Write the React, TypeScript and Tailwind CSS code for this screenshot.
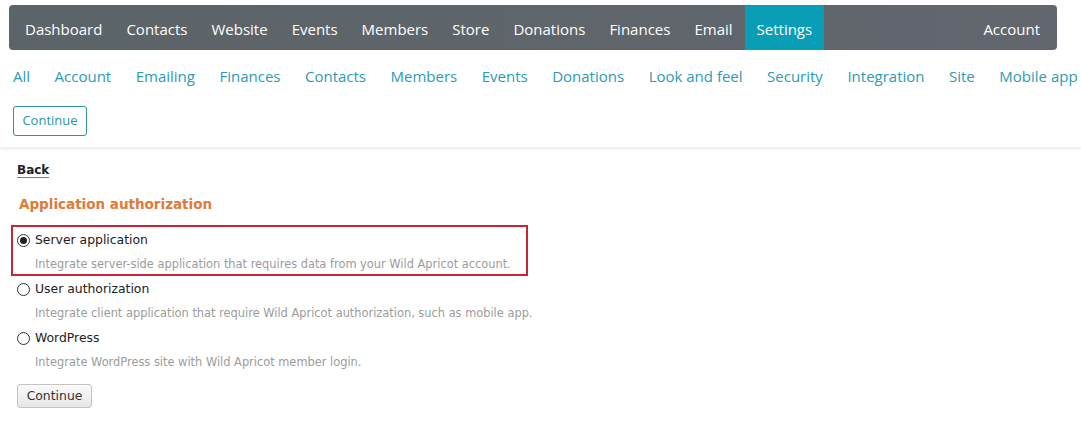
import { useState } from "react";

const topNav = [
  "Dashboard",
  "Contacts",
  "Website",
  "Events",
  "Members",
  "Store",
  "Donations",
  "Finances",
  "Email",
  "Settings",
];

const tabs = [
  "All",
  "Account",
  "Emailing",
  "Finances",
  "Contacts",
  "Members",
  "Events",
  "Donations",
  "Look and feel",
  "Security",
  "Integration",
  "Site",
  "Mobile app",
];

const options = [
  {
    id: "server",
    label: "Server application",
    desc: "Integrate server-side application that requires data from your Wild Apricot account.",
  },
  {
    id: "user",
    label: "User authorization",
    desc: "Integrate client application that require Wild Apricot authorization, such as mobile app.",
  },
  {
    id: "wp",
    label: "WordPress",
    desc: "Integrate WordPress site with Wild Apricot member login.",
  },
];

function Radio({ checked }: { checked: boolean }) {
  return (
    <span className="flex h-[13px] w-[13px] shrink-0 items-center justify-center rounded-full border border-[#333] bg-white">
      {checked && <span className="h-[7px] w-[7px] rounded-full bg-[#222]" />}
    </span>
  );
}

export default function App() {
  const [selected, setSelected] = useState("server");

  return (
    <div className="h-[444px] w-[1081px] overflow-hidden bg-white">
      <div className="h-[147px] bg-white pt-[5px] shadow-[0_2px_3px_rgba(0,0,0,0.08)] font-['Open_Sans',sans-serif]">
        <nav className="mx-[9px] flex h-[45px] w-[1048px] items-stretch rounded-[4px] bg-gradient-to-r from-[#5b6468] to-[#62666e] pl-1 text-[15px] text-white">
          {topNav.map((item) => (
            <div
              key={item}
              className={
                item === "Settings"
                  ? "flex items-center bg-[#0a9db6] px-3 pt-[3px]"
                  : "flex items-center px-3 pt-[3px]"
              }
            >
              {item}
            </div>
          ))}
          <div className="ml-auto flex items-center pl-3 pr-[17px] pt-[3px]">Account</div>
        </nav>

        <div className="flex h-[53px] items-center gap-[24.5px] whitespace-nowrap pl-[13px] text-[15px] text-[#2c9bb5]">
          {tabs.map((t) => (
            <span key={t}>{t}</span>
          ))}
        </div>

        <div className="px-[13px] pt-[3px]">
          <button className="flex h-[30px] w-[74px] items-center justify-center rounded-[3px] border border-[#2c93a8] text-[13px] text-[#2c93a8]">
            Continue
          </button>
        </div>
      </div>

      <div className="px-[17px] pt-[16px] font-['DejaVu_Sans',sans-serif]">
        <a className="block w-fit border-b border-[#2c9bb5] text-[12px] font-bold leading-[14px] text-[#222]">
          Back
        </a>

        <h2 className="mt-[17px] pl-[2px] text-[13.5px] font-bold leading-[18px] text-[#e07a36]">
          Application authorization
        </h2>

        <div className="mt-[12px] flex flex-col items-start">
          {options.map((o, i) => (
            <div
              key={o.id}
              className={
                i === 0
                  ? "-ml-[6px] h-[51px] w-[517px] border-2 border-[#c92532] pl-[4px]"
                  : "h-[49px]"
              }
              onClick={() => setSelected(o.id)}
            >
              <div className="mt-[5px] flex h-[16px] items-center gap-[5px] text-[12.4px] leading-[16px] text-[#222]">
                <Radio checked={selected === o.id} />
                <span>{o.label}</span>
              </div>
              <div className="mt-[9px] whitespace-nowrap pl-[18px] text-[11.4px] leading-[14px] text-[#9c9c9c]">
                {o.desc}
              </div>
            </div>
          ))}
        </div>

        <button className="mt-[10px] flex h-[24px] w-[75px] items-center justify-center rounded-[3px] border border-[#c4c4c4] bg-gradient-to-b from-[#fbfbfb] to-[#e6e6e6] text-[12.4px] text-[#333]">
          Continue
        </button>
      </div>
    </div>
  );
}
